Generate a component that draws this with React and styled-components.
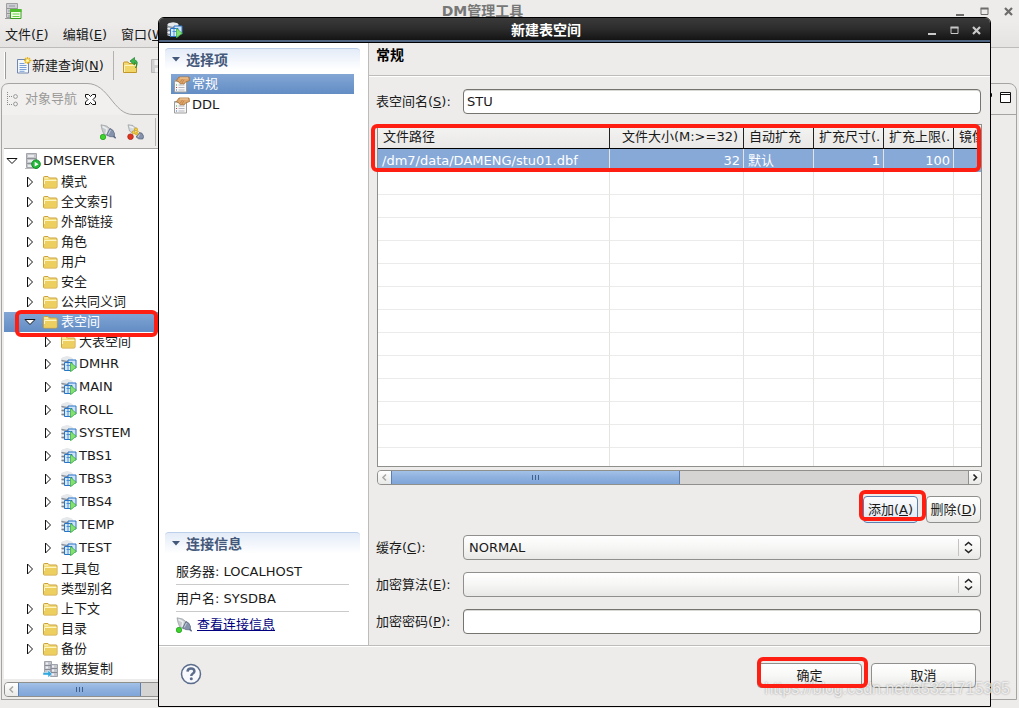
import { useState } from "react";
import styled, { createGlobalStyle, css } from "styled-components";

const GlobalStyle = createGlobalStyle`
  * {
    box-sizing: border-box;
  }

  body {
    margin: 0;
    background: #edecea;
  }

  body, button, input, select {
    font-family: "DejaVu Sans", "Noto Sans CJK SC", sans-serif;
    font-size: 13px;
    line-height: 18px;
    color: #1a1a1a;
  }
`;

/* ---------- icons ---------- */

const FolderIcon = () => (
  <svg width="16" height="16" viewBox="0 0 16 16">
    <path d="M.5 13v-9.500q0-1 1-1h3.500l1.500 1.500h6.500q1 0 1 1v8q0 1-1 1h-11.500q-1 0-1-1z" fill="#f3dc7c" stroke="#cba13a" />
    <path d="M1 13.500v-6.500h12.500v6.500z" fill="#edcf60" />
    <path d="M1.500 10v-3.500h12" fill="none" stroke="#fdf5c4" />
    <path d="M1.500 4h3.500" stroke="#fdf5c4" />
  </svg>
);

const ServerIcon = () => (
  <svg width="16" height="16" viewBox="0 0 16 16">
    <path d="M1.500.5h10v14h-10z" fill="#c3c5ca" stroke="#a2a4a9" />
    <path d="M2 5.500h9M2 10.500h9" stroke="#8f9298" />
    <path d="M3 3h6M3 8h6M3 13h5" stroke="#e9eaee" strokeWidth="2" />
    <path d="M0 15.500h9" stroke="#b8b8b8" />
    <circle cx="11" cy="11.200" r="4.300" fill="#25bb3a" stroke="#128a24" />
    <path d="M9.700 8.800v4.800l3.800-2.400z" fill="#fff" />
  </svg>
);

const AppIcon = () => (
  <svg width="17" height="17" viewBox="0 0 17 17">
    <path d="M1.500.5h11v14h-11z" fill="#cfcfd2" stroke="#a0a0a3" />
    <path d="M2 5.500h10M2 10.500h4" stroke="#949497" />
    <path d="M4 3h6M3 8h3M3 13h3" stroke="#aeb3be" strokeWidth="2" />
    <path d="M0 15.500h6" stroke="#999" />
    <path d="M5.500 6.500h10.500v9h-10.500z" fill="#f4ffe8" stroke="#399e23" />
    <path d="M5 7.500h11.500" stroke="#53bd31" strokeWidth="3" />
    <path d="M7.500 11h7M7.500 13.500h7" stroke="#67ce45" />
  </svg>
);

const SpaceIcon = () => (
  <svg width="16" height="16" viewBox="0 0 16 16">
    <path d="M.5 2.500q6-4 11 0v11q-5.500 2-11 0z" fill="#c4c9cf" />
    <ellipse cx="6" cy="2.500" rx="5.300" ry="2" fill="#e6e9eb" />
    <path d="M.5 4.500q5.500 2 11 0M.5 8.500h4M.5 12.500h4" fill="none" stroke="#7c8692" />
    <path d="M.5 6.500h5M.5 10.500h4" stroke="#f0f2f4" />
    <path d="M7 4h8v8h-8z" fill="#cfe2f6" stroke="#2a74c7" />
    <path d="M3.500 6.500h7.500v8h-7.500z" fill="#d7e9fa" stroke="#2a74c7" />
    <path d="M5.500 9.500h4M7 7v7" stroke="#4d8fd8" />
    <path d="M9.500 6.500v9.300l5.800-4.600z" fill="#86e070" stroke="#3fb04a" strokeWidth=".8" />
  </svg>
);

const CopyDataIcon = () => (
  <svg width="16" height="16" viewBox="0 0 16 16">
    <path d="M1.500.5h7v12h-7zM7.500 3.500h7v12h-7z" fill="#c3c6cd" stroke="#a0a3ab" />
    <path d="M2 4.500h6M2 8.500h6M8 7.500h6M8 11.500h6" stroke="#858a94" />
    <path d="M3 2.500h2M3 6.500h2M9 5.500h2M9 9.500h2M9 13.500h2" stroke="#f0f0f4" strokeWidth="2" />
    <path d="M0 11.500h5v-2.500l4 4-4 3.500v-2.500h-5z" fill="#31a8e0" stroke="#e4f5fd" strokeWidth=".5" />
  </svg>
);

const PlugIcon = () => (
  <svg width="16" height="16" viewBox="0 0 16 16">
    <path d="M1 .8 6.500 2l4.500 3.500-3.500 6.500-4-2.500-1.500-4z" fill="#c6cacd" stroke="#949a9f" strokeWidth=".7" />
    <path d="M2.500 2.500l4.500 2.500-1 5" fill="none" stroke="#eceeee" strokeWidth="1.500" />
    <path d="M10 4.500l-3.300 6.300 3 1.800 4.500.2.300-3.300-1.800-3.500z" fill="#8592ab" stroke="#5d6a84" strokeWidth=".8" />
    <path d="M10.500 6l-2.200 4.500" stroke="#c8d0de" />
    <path d="M13.500 12l2.200 2.300" stroke="#5d6a84" strokeWidth="1.600" />
    <circle cx="3" cy="13" r="2.700" fill="#3ed52a" stroke="#1a971a" strokeWidth=".7" />
  </svg>
);

const UnplugIcon = () => (
  <svg width="17" height="16" viewBox="0 0 17 16">
    <path d="M1 .8 6 1.500l3 3-3.500 4.500-3-2z" fill="#d4d8da" stroke="#949a9f" strokeWidth=".7" />
    <path d="M2.500 2.300l4 1.700" stroke="#f4f5f5" strokeWidth="1.300" />
    <path d="M12.500 8.500l2.500.8 1.700 3.200-1 2.500-4-.2-2.500-1.800z" fill="#8592ab" stroke="#55637f" strokeWidth=".8" />
    <path d="M12.500 10.500l-1.500 2.500" stroke="#c8d0de" />
    <circle cx="9" cy="5.300" r="1.500" fill="#f6cf3a" stroke="#b58c16" strokeWidth=".6" />
    <circle cx="6.600" cy="8.300" r="1.500" fill="#f6cf3a" stroke="#b58c16" strokeWidth=".6" />
    <path d="M9 8l2.500 2M8 9.500l2 1.500M10 6.500l1.500 1.500" stroke="#e2b526" strokeWidth="1.600" />
    <circle cx="3.500" cy="12.700" r="2.800" fill="#e0341f" stroke="#a31b10" strokeWidth=".7" />
  </svg>
);

const NewQueryIcon = () => (
  <svg width="15" height="17" viewBox="0 0 15 17">
    <path d="M.5 2.500h11v13.500h-11z" fill="#f3f8fd" stroke="#7087ae" />
    <path d="M2.500 6.500h5M2.500 8.500h7M2.500 10.500h7M2.500 12.500h7M2.500 14.300h5" stroke="#7ba0d6" />
    <path d="M10.500 0v7M7 3.500h7.500M8 1l5 5M13 1l-5 5" stroke="#e8b722" strokeWidth="1.300" />
    <circle cx="10.500" cy="3.500" r="1.600" fill="#fff6a8" />
  </svg>
);

const OpenIcon = () => (
  <svg width="17" height="17" viewBox="0 0 17 17">
    <path d="M.5 15.500v-9.500q0-1 1-1h3.500l1 1.500h7.500v9z" fill="#f3d976" stroke="#c29727" />
    <path d="M1 15v-6h12v6z" fill="#f2d567" />
    <path d="M1.500 15v-6.500h11.500" fill="none" stroke="#fdf3ba" />
    <path d="M12.500 11q2.500-4-1-5.500v2.500L7 4l4.500-3.500v2.300q5 1.500 1 8.200z" fill="#3db54a" stroke="#1f8331" strokeWidth=".7" />
  </svg>
);

const SaveIcon = () => (
  <svg width="16" height="16" viewBox="0 0 16 16">
    <path d="M.5 1.500h14v13h-14z" fill="#d0d0d0" stroke="#b5b5b5" />
    <path d="M3.500 2h8v5h-8zM4 10h7v4.500h-7z" fill="#f0f0f0" />
  </svg>
);

const PropertyIcon = () => (
  <svg width="17" height="17" viewBox="0 0 17 17">
    <path d="M1.500 4.500h12v11.500h-12z" fill="#f8f8f8" stroke="#9c9c9c" />
    <path d="M2 5.500h11" stroke="#b9b9b9" />
    <path d="M5.500 9h6M5.500 11.500h6M5.500 14h6" stroke="#b4b4be" />
    <path d="M3 9h1" stroke="#3ba53b" />
    <path d="M3 11.500h1" stroke="#c33" />
    <path d="M3 14h1" stroke="#36c" />
    <path d="M3.500 4.500 6 1h10l.5 3.500-4 1.500-1.500 2-2-.5-1.500.5-1.500-2z" fill="#dfa76d" stroke="#a66e35" strokeWidth=".8" />
    <path d="M7 6.500l2.500-3.500M9 7l2-3.500" stroke="#b57a3f" strokeWidth=".7" />
    <path d="M7 2h8" stroke="#f3cfa4" />
  </svg>
);

const NavIcon = () => (
  <svg width="14" height="15" viewBox="0 0 14 15">
    <path d="M1.500 0v14M3 4.500h4M3 12.500h4" stroke="#8a8a8a" strokeDasharray="1 1" />
    <circle cx="9.500" cy="4.500" r="1.900" fill="#f4f4f4" stroke="#999" />
    <circle cx="9.500" cy="12" r="1.900" fill="#f4f4f4" stroke="#999" />
  </svg>
);

const TabCloseIcon = () => (
  <svg width="11" height="11" viewBox="0 0 11 11">
    <path d="M.5.5h3l2 2 2-2h3v2.500l-2.500 2.500 2.500 2.500v2.500h-3l-2-2-2 2h-3v-2.500l2.500-2.500-2.500-2.500z" fill="#fff" stroke="#111" />
  </svg>
);

const TabCurve = styled.svg`
  position: absolute;
  inset: 0;
`;

const HelpIcon = () => (
  <svg width="22" height="22" viewBox="0 0 22 22">
    <circle cx="11" cy="11" r="9.500" fill="#f7f9fc" stroke="#5b6c8c" strokeWidth="1.500" />
    <path d="M7.500 8.700q.2-3.200 3.500-3.200t3.400 2.700q0 1.500-1.800 2.600-1.300.8-1.300 2.100" fill="none" stroke="#5b6c8c" strokeWidth="2.500" />
    <circle cx="11.300" cy="15.800" r="1.500" fill="#5b6c8c" />
  </svg>
);

const Arrow = ({ open }) => (
  <svg width="12" height="12" viewBox="0 0 12 12">
    {open ? (
      <path d="M1 3.500h10l-5 5z" fill="#fff" stroke="#111" />
    ) : (
      <path d="M3.500 1v10l5-5z" fill="#fff" stroke="#111" />
    )}
  </svg>
);

const MinimizeGlyph = () => (
  <svg width="11" height="11" viewBox="0 0 11 11">
    <path d="M1 9h8" stroke="currentColor" strokeWidth="2" />
  </svg>
);

const MaximizeGlyph = () => (
  <svg width="11" height="11" viewBox="0 0 11 11">
    <path d="M2 2.500v6h7v-6z" fill="none" stroke="currentColor" />
    <path d="M1.500 2.500h8" stroke="currentColor" strokeWidth="2" />
  </svg>
);

const CloseGlyph = () => (
  <svg width="11" height="11" viewBox="0 0 11 11">
    <path d="M2 2l7 7M9 2l-7 7" stroke="currentColor" strokeWidth="2.200" />
  </svg>
);

const Chevron = ({ right }) => (
  <svg width="7" height="9" viewBox="0 0 7 9">
    <path d={right ? "M1.500 1.500l3 3-3 3" : "M5 1.500l-3 3 3 3"} fill="none" stroke="currentColor" strokeWidth="1.600" />
  </svg>
);

const icons = {
  folder: FolderIcon,
  server: ServerIcon,
  space: SpaceIcon,
  copy: CopyDataIcon,
};

/* ---------- shared parts ---------- */

const Marker = styled.span`
  position: absolute;
  z-index: 2;
  inset: ${(p) => p.$inset};
  height: ${(p) => p.$height || "auto"};
  width: ${(p) => p.$width || "auto"};
  border: 4px solid #ff1e12;
  border-radius: 6px;
  pointer-events: none;
`;

const Marked = styled.div`
  position: relative;
  display: flex;
`;

const PlainButton = styled.button`
  display: flex;
  align-items: center;
  padding: 0;
  border: 0;
  background: none;
  color: inherit;
`;

const PushButton = styled.button`
  min-width: ${(p) => (p.$wide ? "105px" : "55px")};
  height: ${(p) => (p.$wide ? "25px" : "27px")};
  padding: 0;
  border: 1px solid ${(p) => (p.$focus ? "#5b7fb0" : "#8f8f8b")};
  border-radius: 4px;
  background: ${(p) =>
    p.$focus
      ? "linear-gradient(#fbfcfe, #dfe6f0)"
      : "linear-gradient(#fff, #f8f8f7 50%, #e9e9e7)"};
  white-space: nowrap;
`;

const WindowButtons = styled.div`
  display: flex;
  gap: ${(p) => p.$gap};
  color: ${(p) => p.$color};
`;

const ScrollBox = styled.div`
  display: flex;
  height: 15px;
  border: 1px solid #8f8f8b;
  border-radius: 4px;
  background: #d5d4d2;
  overflow: hidden;
`;

const ScrollArrow = styled.button`
  display: flex;
  flex: none;
  align-items: center;
  justify-content: center;
  width: 13px;
  padding: 0;
  border: 0;
  background: linear-gradient(#fff, #e9e9e7);
  color: ${(p) => (p.$off ? "#a9a9a6" : "#222")};
  ${(p) => p.$end && "border-left: 1px solid #8f8f8b;"}
`;

const ScrollTrack = styled.div`
  flex: 1;
  display: flex;
`;

const ScrollThumb = styled.div`
  display: flex;
  align-items: center;
  justify-content: center;
  gap: 2px;
  width: ${(p) => p.$size};
  border: 1px solid #5a7fb3;
  border-width: 0 1px;
  background: linear-gradient(#a3c1e8, #8db0de 50%, #80a5d8);

  i {
    width: 1px;
    height: 5px;
    background: #3f5f8d;
  }
`;

const ScrollBar = ({ size }) => (
  <ScrollBox>
    <ScrollArrow $off aria-label="向左滚动">
      <Chevron />
    </ScrollArrow>
    <ScrollTrack>
      <ScrollThumb $size={size}>
        <i />
        <i />
        <i />
      </ScrollThumb>
    </ScrollTrack>
    <ScrollArrow $end aria-label="向右滚动">
      <Chevron right />
    </ScrollArrow>
  </ScrollBox>
);

/* ---------- main window ---------- */

const Desktop = styled.div`
  position: relative;
  display: flex;
  flex-direction: column;
  height: 100vh;
  min-height: 708px;
  overflow: hidden;
  background: #edecea;
`;

const MainTitle = styled.header`
  display: flex;
  align-items: center;
  height: 22px;
  padding: 0 5px;

  h1 {
    flex: 1;
    margin: 0 12px 0 0;
    font-size: 14px;
    line-height: 20px;
    text-align: center;
    color: #777;
  }
`;

const MenuBar = styled.nav`
  display: flex;
  gap: 14px;
  height: 26px;
  padding: 0 5px;
  border-bottom: 1px solid #bdbcba;
  background: linear-gradient(#edecea, #e4e3e1);
`;

const ToolBar = styled.div`
  display: flex;
  align-items: center;
  height: 35px;
  padding-left: 4px;
`;

const Grip = styled.span`
  width: 2px;
  height: 27px;
  margin-right: 11px;
  border-right: 1px solid #9c9b99;
  background: #fff;
`;

const ToolRule = styled.span`
  width: 1px;
  height: ${(p) => p.$height || "29px"};
  margin: 0 ${(p) => p.$space || "9px"};
  background: #b3b2b0;
`;

const Workbench = styled.main`
  flex: 1;
  display: flex;
  gap: 3px;
  min-height: 0;
  padding: 0 2px 0 1px;
`;

const NavPane = styled.section`
  display: flex;
  flex-direction: column;
  flex: none;
  width: 220px;
`;

const NavTab = styled.div`
  position: relative;
  height: 32px;
`;

const TabLabel = styled.div`
  position: relative;
  display: flex;
  align-items: center;
  height: 32px;
  padding-left: 5px;
  color: #9b9a98;

  span {
    margin: 0 8px 0 5px;
  }
`;

const NavBody = styled.div`
  flex: 1;
  display: flex;
  flex-direction: column;
  min-height: 0;
  padding: 0 2px 2px;
  border: 1px solid #a5a4a2;
  border-top: 0;
`;

const NavTools = styled.div`
  display: flex;
  align-items: center;
  gap: 11px;
  height: 34px;
  padding-left: 96px;
  border-bottom: 1px solid #a5a4a2;
`;

const Tree = styled.ul`
  flex: 1;
  min-height: 0;
  margin: 0 0 3px;
  padding: 0;
  overflow: hidden;
  list-style: none;
  background: #fff;
`;

const TreeRow = styled.li`
  position: relative;
  display: flex;
  align-items: center;
  height: ${(p) => (p.$tall ? "23px" : "20px")};
  padding-left: ${(p) => 2 + p.$level * 18}px;
  ${(p) =>
    p.$active &&
    css`
      background: linear-gradient(#83a6d5, #628dc4);
      color: #fff;
    `}
`;

const ArrowSlot = styled.span`
  display: flex;
  width: 19px;
`;

const TreeIcon = styled.span`
  display: flex;
  margin-right: 2px;
`;

const EditorPane = styled.section`
  flex: 1;
  border: 1px solid #a5a4a2;
  border-radius: 0 8px 0 0;
`;

const EditorTabs = styled.div`
  display: flex;
  align-items: flex-start;
  justify-content: flex-end;
  gap: 8px;
  height: 31px;
  padding: 8px 5px;
  border-bottom: 1px solid #a5a4a2;
`;

const StatusBar = styled.footer`
  height: 8px;
`;

const tree = [
  { text: "DMSERVER", icon: "server", level: 0, open: true, tall: true },
  { text: "模式", icon: "folder", level: 1 },
  { text: "全文索引", icon: "folder", level: 1 },
  { text: "外部链接", icon: "folder", level: 1 },
  { text: "角色", icon: "folder", level: 1 },
  { text: "用户", icon: "folder", level: 1 },
  { text: "安全", icon: "folder", level: 1 },
  { text: "公共同义词", icon: "folder", level: 1 },
  { text: "表空间", icon: "folder", level: 1, open: true, active: true },
  { text: "大表空间", icon: "folder", level: 2 },
  { text: "DMHR", icon: "space", level: 2, tall: true },
  { text: "MAIN", icon: "space", level: 2, tall: true },
  { text: "ROLL", icon: "space", level: 2, tall: true },
  { text: "SYSTEM", icon: "space", level: 2, tall: true },
  { text: "TBS1", icon: "space", level: 2, tall: true },
  { text: "TBS3", icon: "space", level: 2, tall: true },
  { text: "TBS4", icon: "space", level: 2, tall: true },
  { text: "TEMP", icon: "space", level: 2, tall: true },
  { text: "TEST", icon: "space", level: 2, tall: true },
  { text: "工具包", icon: "folder", level: 1 },
  { text: "类型别名", icon: "folder", level: 1, leaf: true },
  { text: "上下文", icon: "folder", level: 1 },
  { text: "目录", icon: "folder", level: 1 },
  { text: "备份", icon: "folder", level: 1 },
  { text: "数据复制", icon: "copy", level: 1, leaf: true },
];

const MainWindow = () => (
  <>
    <MainTitle>
      <AppIcon />
      <h1>DM管理工具</h1>
      <WindowButtons $gap="13px" $color="#6d6c6a">
        <PlainButton aria-label="最小化"><MinimizeGlyph /></PlainButton>
        <PlainButton aria-label="最大化"><MaximizeGlyph /></PlainButton>
        <PlainButton aria-label="关闭"><CloseGlyph /></PlainButton>
      </WindowButtons>
    </MainTitle>
    <MenuBar>
      <PlainButton><span>文件(<u>F</u>)</span></PlainButton>
      <PlainButton><span>编辑(<u>E</u>)</span></PlainButton>
      <PlainButton><span>窗口(<u>W</u>)</span></PlainButton>
    </MenuBar>
    <ToolBar>
      <Grip />
      <PlainButton>
        <NewQueryIcon />
        <span>新建查询(<u>N</u>)</span>
      </PlainButton>
      <ToolRule />
      <PlainButton aria-label="打开"><OpenIcon /></PlainButton>
      <ToolRule $height="0" $space="5px" />
      <PlainButton aria-label="保存"><SaveIcon /></PlainButton>
    </ToolBar>
    <Workbench>
      <NavPane>
        <NavTab>
          <TabCurve width="220" height="32" viewBox="0 0 220 32">
            <path d="M.5 32V8Q.5.500 8 .5h78c22 0 26 31 46 31h88" fill="#f1f0ef" stroke="#a5a4a2" />
          </TabCurve>
          <TabLabel>
            <NavIcon />
            <span>对象导航</span>
            <PlainButton aria-label="关闭对象导航"><TabCloseIcon /></PlainButton>
          </TabLabel>
        </NavTab>
        <NavBody>
          <NavTools>
            <PlainButton aria-label="连接"><PlugIcon /></PlainButton>
            <PlainButton aria-label="断开"><UnplugIcon /></PlainButton>
            <ToolRule $space="0" $height="28px" />
          </NavTools>
          <Tree>
            {tree.map((item) => {
              const Icon = icons[item.icon];
              return (
                <TreeRow
                  key={item.text}
                  $level={item.level}
                  $tall={item.tall}
                  $active={item.active}
                >
                  <ArrowSlot>{!item.leaf && <Arrow open={item.open} />}</ArrowSlot>
                  <TreeIcon><Icon /></TreeIcon>
                  {item.text}
                  {item.active && (
                    <Marker $inset="-2px auto auto 11px" $width="143px" $height="27px" />
                  )}
                </TreeRow>
              );
            })}
          </Tree>
          <ScrollBar size="66%" />
        </NavBody>
      </NavPane>
      <EditorPane>
        <EditorTabs>
          <PlainButton aria-label="最小化编辑区">
            <svg width="11" height="11" viewBox="0 0 11 11">
              <path d="M.5 1.500h10v3h-10z" fill="#fff" stroke="#111" />
            </svg>
          </PlainButton>
          <PlainButton aria-label="最大化编辑区">
            <svg width="11" height="11" viewBox="0 0 11 11">
              <path d="M.5.5h10v10h-10zM0 2.500h11" fill="#fff" stroke="#111" />
            </svg>
          </PlainButton>
        </EditorTabs>
      </EditorPane>
    </Workbench>
    <StatusBar />
  </>
);

/* ---------- dialog ---------- */

const Dialog = styled.div`
  position: absolute;
  top: 17px;
  right: 28px;
  bottom: 1px;
  left: 158px;
  display: flex;
  flex-direction: column;
  border: 1px solid #000;
  border-radius: 6px 6px 0 0;
  background: #edecea;
  overflow: hidden;
`;

const DialogTitle = styled.header`
  display: flex;
  align-items: center;
  flex: none;
  height: 25px;
  padding: 0 8px;
  border-bottom: 1px solid #000;
  background: linear-gradient(#3a3a3a, #2c2c2c 45%, #141414 92%, #4e6480 93%);

  h2 {
    flex: 1;
    margin: 0 18px 0 0;
    font-size: 14px;
    line-height: 20px;
    text-align: center;
    color: #fff;
  }
`;

const DialogBody = styled.div`
  flex: 1;
  display: flex;
  min-height: 0;
  border-bottom: 1px solid #bdbcba;
`;

const SidePane = styled.aside`
  display: flex;
  flex-direction: column;
  flex: none;
  width: 210px;
  padding: 5px 8px 7px 6px;
  border-right: 1px solid #bdbcba;
  background: #fff;
`;

const SectionTitle = styled.h3`
  display: flex;
  align-items: center;
  gap: 6px;
  height: 22px;
  margin: 0;
  padding-left: 7px;
  border-top: 1px solid #bcd0ec;
  border-radius: 4px;
  background: linear-gradient(#e4ecf8, #fff);
  font-size: 14px;
  line-height: 20px;
  color: #44587a;
`;

const SideList = styled.div`
  flex: 1;
  padding: 4px 6px;
`;

const SideItem = styled(PlainButton)`
  gap: 2px;
  width: 100%;
  height: 20px;
  margin-bottom: 1px;
  padding-left: 2px;
  ${(p) =>
    p.$active &&
    css`
      background: linear-gradient(#83a6d5, #628dc4);
      color: #fff;
    `}
`;

const InfoList = styled.div`
  padding: 4px 11px 0;
`;

const InfoLine = styled.p`
  height: 27px;
  margin: 0;
  border-bottom: 1px solid #cbcac8;
  line-height: 27px;
`;

const InfoLink = styled.a`
  display: flex;
  align-items: center;
  gap: 5px;
  height: 26px;
  color: #000080;
  text-decoration: none;

  span {
    text-decoration: underline;
  }
`;

const Page = styled.div`
  flex: 1;
  display: flex;
  flex-direction: column;
  min-width: 0;
`;

const PageTitle = styled.h3`
  height: 33px;
  margin: 0;
  padding: 2px 7px;
  border-bottom: 1px solid #bdbcba;
  box-shadow: 0 1px #fff;
  font-size: 14px;
  line-height: 20px;
  color: #000;
`;

const Form = styled.form`
  flex: 1;
  display: flex;
  flex-direction: column;
  min-height: 0;
  padding: 13px 9px 11px 7px;
`;

const Field = styled.div`
  display: grid;
  grid-template-columns: 87px 1fr;
  align-items: center;
  margin-top: ${(p) => (p.$first ? 0 : "12px")};
`;

const TextInput = styled.input`
  width: 100%;
  height: 25px;
  padding: 0 3px;
  border: 1px solid #75746f;
  border-radius: 4px;
  background: #fff;
  box-shadow: inset 0 1px #d8d8d6;
  outline: none;
`;

const SelectBox = styled.div`
  position: relative;

  select {
    display: block;
    width: 100%;
    height: 25px;
    padding: 0 5px;
    border: 1px solid #8f8f8b;
    border-radius: 4px;
    background: linear-gradient(#fff, #f6f6f5 50%, #e8e8e6);
    appearance: none;
  }

  svg {
    position: absolute;
    top: 4px;
    right: 6px;
    pointer-events: none;
  }
`;

const TableArea = styled.div`
  position: relative;
  flex: 1 1 0;
  display: flex;
  min-height: 0;
  margin: 10px 0 3px;
`;

const TableFrame = styled.div`
  flex: 1;
  min-width: 0;
  margin: 0 -1px 0 1px;
  border: 1px solid #8f8f8b;
  background: #fff;
  overflow: hidden;
`;

const Grid = styled.table`
  width: 100%;
  border-collapse: separate;
  border-spacing: 0;
  table-layout: fixed;

  th, td {
    height: 23px;
    padding: 0 3px;
    overflow: hidden;
    white-space: nowrap;
    text-align: left;
    font-weight: normal;
  }

  th {
    height: 24px;
    padding: 0 5px;
    border-right: 1px solid #222;
    border-bottom: 1px solid #000;
    background: linear-gradient(#f4f4f2, #e9e8e6);
  }

  td {
    border-right: 1px solid #e4e4e2;
    border-bottom: 1px solid #ebebea;
  }

  th:last-child, td:last-child {
    border-right: 0;
  }

  .num {
    text-align: right;
  }
`;

const ChosenRow = styled.tr`
  background: #86a9d8;
  color: #fff;

  td {
    padding: 1px 3px 0 4px;
    border-bottom-color: #86a9d8;
  }
`;

const ScrollSlot = styled.div`
  margin: 0 -1px 0 1px;
`;

const RowButtons = styled.div`
  display: flex;
  justify-content: flex-end;
  gap: 8px;
  margin-top: 11px;
`;

const DialogFooter = styled.footer`
  display: flex;
  align-items: flex-start;
  gap: 9px;
  flex: none;
  height: 60px;
  padding: 17px 14px 0 21px;
  box-shadow: inset 0 1px #fff;
`;

const HelpButton = styled(PlainButton)`
  margin-right: auto;
`;

const Watermark = styled.div`
  position: absolute;
  right: 9px;
  bottom: 9px;
  font-family: "Liberation Sans", sans-serif;
  font-size: 16px;
  line-height: 20px;
  color: rgba(255, 255, 255, 0.75);
  text-shadow: 0 0 2px rgba(0, 0, 0, 0.4);
  pointer-events: none;
`;

const emptyRows = Array.from({ length: 13 }, (_, i) => i);

const SelectArrows = () => (
  <svg width="18" height="17" viewBox="0 0 18 17">
    <path d="M1.500 0v17" stroke="#c4c3c1" />
    <path d="M8 6.500l3.500-3 3.500 3M8 10.500l3.500 3 3.500-3" fill="none" stroke="#222" strokeWidth="1.600" />
  </svg>
);

const Triangle = () => (
  <svg width="8" height="5" viewBox="0 0 8 5">
    <path d="M0 0h8l-4 4.500z" fill="#44587a" />
  </svg>
);

const NewSpaceDialog = () => {
  const [name, setName] = useState("STU");
  const [password, setPassword] = useState("");

  return (
    <Dialog role="dialog" aria-labelledby="dialog-title">
      <DialogTitle>
        <SpaceIcon />
        <h2 id="dialog-title">新建表空间</h2>
        <WindowButtons $gap="11px" $color="#c9c9c9">
          <PlainButton aria-label="最小化"><MinimizeGlyph /></PlainButton>
          <PlainButton aria-label="最大化"><MaximizeGlyph /></PlainButton>
          <PlainButton aria-label="关闭"><CloseGlyph /></PlainButton>
        </WindowButtons>
      </DialogTitle>

      <DialogBody>
        <SidePane>
          <SectionTitle><Triangle />选择项</SectionTitle>
          <SideList>
            <SideItem $active><PropertyIcon />常规</SideItem>
            <SideItem><PropertyIcon />DDL</SideItem>
          </SideList>
          <SectionTitle><Triangle />连接信息</SectionTitle>
          <InfoList>
            <InfoLine>服务器: LOCALHOST</InfoLine>
            <InfoLine>用户名: SYSDBA</InfoLine>
            <InfoLink href="#connection">
              <PlugIcon />
              <span>查看连接信息</span>
            </InfoLink>
          </InfoList>
        </SidePane>

        <Page>
          <PageTitle>常规</PageTitle>
          <Form onSubmit={(e) => e.preventDefault()}>
            <Field $first>
              <label htmlFor="name">表空间名(<u>S</u>):</label>
              <TextInput id="name" value={name} onChange={(e) => setName(e.target.value)} />
            </Field>

            <TableArea>
              <TableFrame>
                <Grid>
                  <colgroup>
                    <col />
                    <col width="134" />
                    <col width="70" />
                    <col width="70" />
                    <col width="70" />
                    <col width="27" />
                  </colgroup>
                  <thead>
                    <tr>
                      <th>文件路径</th>
                      <th className="num">文件大小(M:&gt;=32)</th>
                      <th>自动扩充</th>
                      <th>扩充尺寸(.</th>
                      <th>扩充上限(.</th>
                      <th>镜像</th>
                    </tr>
                  </thead>
                  <tbody>
                    <ChosenRow>
                      <td>/dm7/data/DAMENG/stu01.dbf</td>
                      <td className="num">32</td>
                      <td>默认</td>
                      <td className="num">1</td>
                      <td className="num">100</td>
                      <td />
                    </ChosenRow>
                    {emptyRows.map((row) => (
                      <tr key={row}>
                        <td /><td /><td /><td /><td /><td />
                      </tr>
                    ))}
                  </tbody>
                </Grid>
              </TableFrame>
              <Marker $inset="0 0 auto -5px" $height="48px" />
            </TableArea>
            <ScrollSlot>
              <ScrollBar size="50%" />
            </ScrollSlot>

            <RowButtons>
              <Marked>
                <PushButton type="button" $focus>添加(<u>A</u>)</PushButton>
                <Marker $inset="-6px -8px 2px -4px" />
              </Marked>
              <PushButton type="button">删除(<u>D</u>)</PushButton>
            </RowButtons>

            <Field>
              <label htmlFor="cache">缓存(<u>C</u>):</label>
              <SelectBox>
                <select id="cache" defaultValue="NORMAL">
                  <option>NORMAL</option>
                  <option>KEEP</option>
                </select>
                <SelectArrows />
              </SelectBox>
            </Field>
            <Field>
              <label htmlFor="cipher">加密算法(<u>E</u>):</label>
              <SelectBox>
                <select id="cipher" defaultValue="">
                  <option value="" />
                </select>
                <SelectArrows />
              </SelectBox>
            </Field>
            <Field>
              <label htmlFor="password">加密密码(<u>P</u>):</label>
              <TextInput
                id="password"
                type="password"
                value={password}
                onChange={(e) => setPassword(e.target.value)}
              />
            </Field>
          </Form>
        </Page>
      </DialogBody>

      <DialogFooter>
        <HelpButton aria-label="帮助"><HelpIcon /></HelpButton>
        <Marked>
          <PushButton $wide>确定</PushButton>
          <Marker $inset="-6px -6px 0 0" />
        </Marked>
        <PushButton $wide>取消</PushButton>
      </DialogFooter>
    </Dialog>
  );
};

const App = () => (
  <Desktop>
    <GlobalStyle />
    <MainWindow />
    <NewSpaceDialog />
    <Watermark>https://blog.csdn.net/a5321715365</Watermark>
  </Desktop>
);

export default App;
